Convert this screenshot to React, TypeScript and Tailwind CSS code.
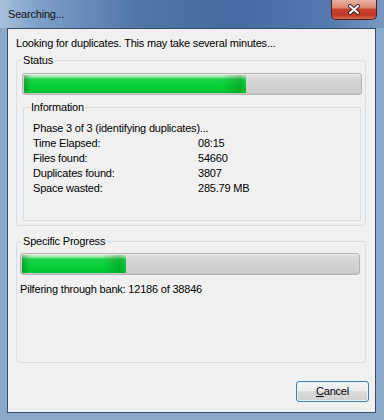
import React from "react";

function Bar({ fill }: { fill: number }) {
  return (
    <div className="h-[22px] rounded-[3px] border border-[#b4b4b4] bg-[linear-gradient(to_bottom,#ececec,#dadada_15%,#d2d2d2_50%,#cdcdcd_90%,#c4c4c4)] p-[1px] flex">
      <div
        style={{ width: fill }}
        className="h-full rounded-[1px] bg-[linear-gradient(to_right,rgba(0,70,0,0.3),rgba(0,70,0,0)_8px,rgba(0,70,0,0)_calc(100%_-_24px),rgba(0,70,0,0.22)_calc(100%_-_6px),rgba(0,70,0,0.05)),linear-gradient(to_bottom,#c2f2cb,#8fe59f_12%,#22d24a_22%,#04d136_60%,#03c532)]"
      />
    </div>
  );
}

export default function App() {
  return (
    <div className="w-[384px] h-[420px] flex flex-col bg-[#8ca8c9] font-['Liberation_Sans',Arial,sans-serif] text-[11px] leading-[15px] tracking-[-0.2px] text-black overflow-hidden">
      <div className="h-[28px] flex items-start justify-between bg-[linear-gradient(to_right,#a9c1de,#7e9fc8_10%,#5177aa_35%,#436b9f_60%,#5279ad_85%,#7898c2)]">
        <div className="pl-[8px] pt-[7px] text-[#111]">Searching...</div>
        <div className="mr-[7px] w-[46px] h-[20px] rounded-b-[5px] border border-t-0 border-[#4a2020] bg-[linear-gradient(to_bottom,#e9b0a2,#dc8874_40%,#c8402a_50%,#c13a25_80%,#d76a50)] flex items-center justify-center">
          <svg width="14" height="11" viewBox="0 0 14 11">
            <path d="M3 2 L11 9 M11 2 L3 9" stroke="#3a1a1a" strokeWidth="4" strokeLinecap="round" />
            <path d="M3 2 L11 9 M11 2 L3 9" stroke="#ffffff" strokeWidth="2.2" strokeLinecap="round" />
          </svg>
        </div>
      </div>
      <div className="ml-[7px] mr-[8px] mb-[7px] flex-1 border border-[#3b4d64] bg-[#f0f0f0] flex flex-col pl-[8px] pr-[9px]">
        <div className="pt-[7px]">Looking for duplicates. This may take several minutes...</div>
        <fieldset className="mt-[2px] border border-[#d5dfe5] rounded-[3px] pl-[5px] pr-[3px] pt-[5px] pb-[4px]">
          <legend className="px-[1px]">Status</legend>
          <Bar fill={222} />
          <fieldset className="mt-[5px] mx-[1px] border border-[#d5dfe5] rounded-[3px] pl-[9px] pr-[4px] pt-[6px] pb-[24px]">
            <legend className="ml-[-3px] px-[1px]">Information</legend>
            <div>Phase 3 of 3 (identifying duplicates)...</div>
            <div className="grid grid-cols-[165px_1fr]">
              <div>Time Elapsed:</div>
              <div>08:15</div>
              <div>Files found:</div>
              <div>54660</div>
              <div>Duplicates found:</div>
              <div>3807</div>
              <div>Space wasted:</div>
              <div>285.79 MB</div>
            </div>
          </fieldset>
        </fieldset>
        <fieldset className="mt-[8px] border border-[#d5dfe5] rounded-[3px] pl-[3px] pr-[5px] pt-[4px] pb-[65px]">
          <legend className="ml-[2px] px-[1px]">Specific Progress</legend>
          <Bar fill={104} />
          <div className="mt-[7px]">Pilfering through bank: 12186 of 38846</div>
        </fieldset>
        <div className="mt-[18px] flex justify-end mr-[-3px]">
          <button className="w-[73px] h-[21px] rounded-[3px] border border-[#3c7fb1] bg-[linear-gradient(to_bottom,#f4f4f4,#ececec_45%,#dcdcdc_50%,#cfcfcf)] shadow-[inset_0_0_0_1px_#e8f4fb] text-[11px] leading-[15px] text-black">
            <span className="underline underline-offset-[1px]">C</span>ancel
          </button>
        </div>
      </div>
    </div>
  );
}
